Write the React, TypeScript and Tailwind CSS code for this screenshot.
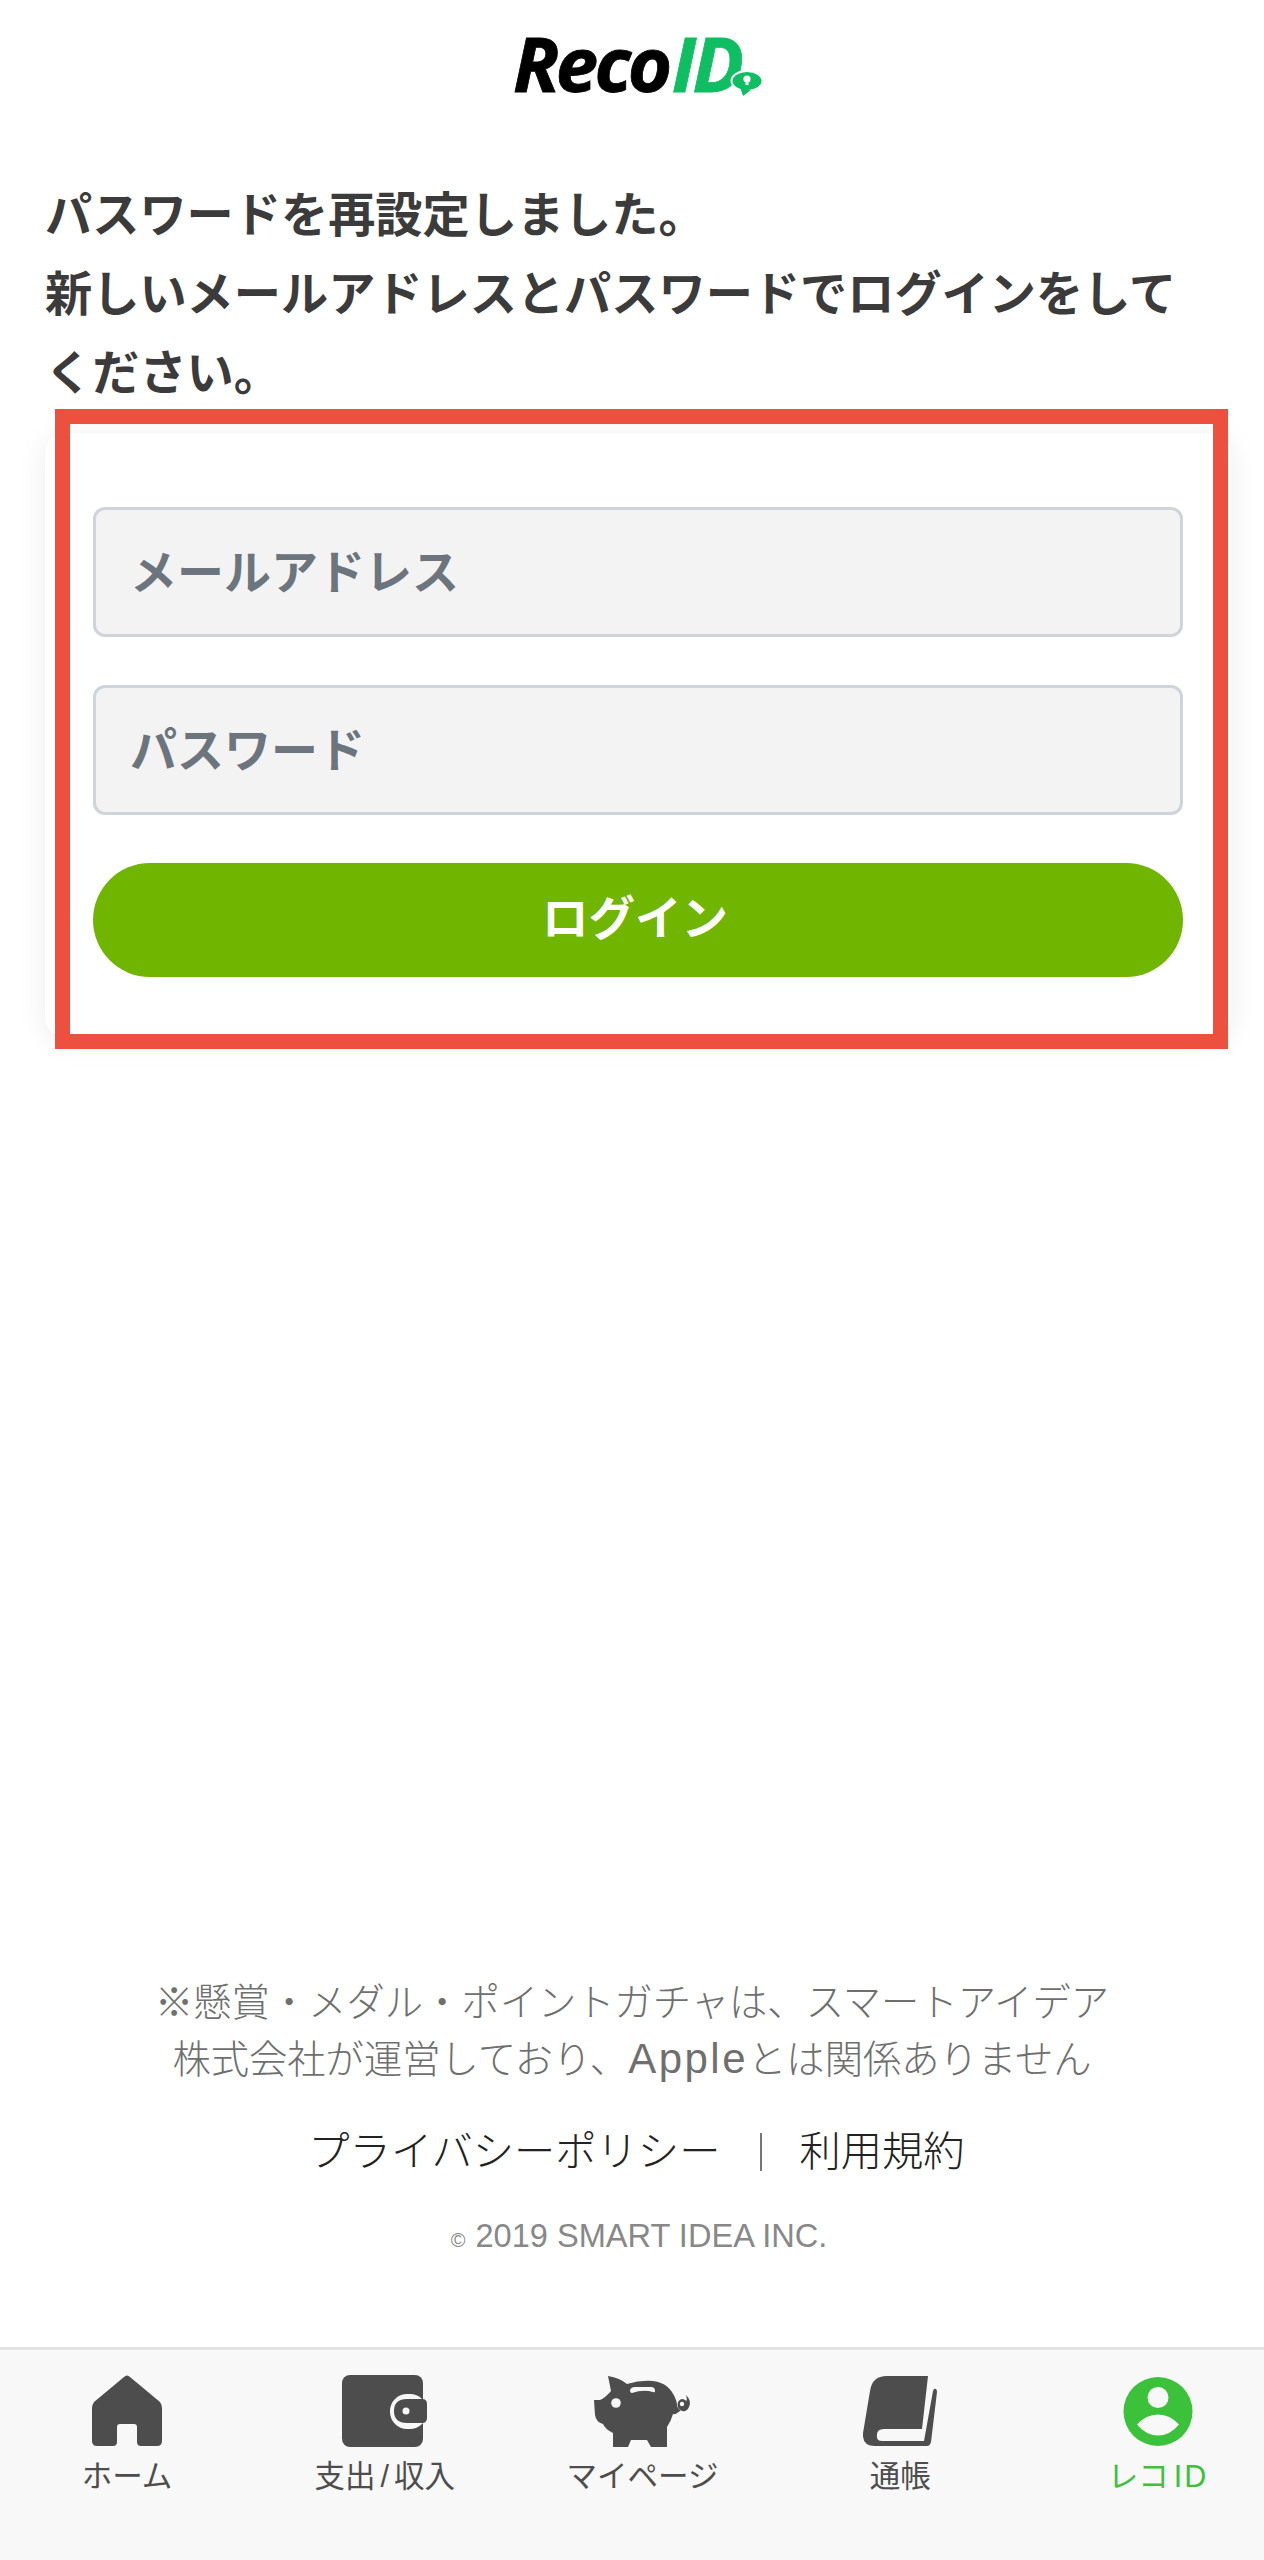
import type { ReactNode } from 'react';

function HomeIcon() {
  return (
    <svg viewBox="0 0 72 72" className="h-[72px] w-[72px] fill-[#4d4d4d]" aria-hidden="true">
      <path d="M33 2 Q36 -1 39 2 L69 27 Q71 30 71 33 V66 Q71 71 66 71 H50 Q46 71 46 67 V52 Q46 49 43 49 H29 Q26 49 26 52 V67 Q26 71 22 71 H6 Q1 71 1 66 V33 Q1 30 3 27 Z" />
    </svg>
  );
}

function WalletIcon() {
  return (
    <svg viewBox="0 0 85 72" className="h-[72px] w-[85px]" aria-hidden="true">
      <rect x="0" y="0" width="81" height="72" rx="8" fill="#4d4d4d" />
      <rect x="48" y="19" width="37" height="35" rx="17" fill="#f8f8f8" />
      <path d="M65 24 H80 Q85 24 85 29 V43 Q85 48 80 48 H65 Q52 48 52 36 Q52 24 65 24 Z" fill="#4d4d4d" />
      <circle cx="64" cy="36" r="3.5" fill="#f8f8f8" />
    </svg>
  );
}

function PiggyIcon() {
  return (
    <svg viewBox="8 8 100 73" className="h-[73px] w-[100px]" aria-hidden="true">
      <path
        d="M23 9 Q35 11 42 17 Q55 13 68 14 Q85 16 91 33 Q92 36 92 39 Q94 43 96 43 Q91 48 88 47 Q86 54 82 60 V80 H66 L62 73 H46 L43 80 H28 V66 Q20 62 18 57 Q11 55 10 48 L9 33 H15 Q20 31 26 24 Z"
        fill="#4d4d4d"
      />
      <path d="M97 44 Q91 41 93 35 Q96 30 100 33 Q103 36 101 28 Q107 34 104 40 Q102 45 97 44 Z" fill="#4d4d4d" />
      <circle cx="97" cy="37" r="2.2" fill="#f8f8f8" />
      <circle cx="31" cy="36" r="4.8" fill="#f8f8f8" />
      <path d="M45 23 Q46 20 50 20 H66 Q70 20 70 24 Q70 26 68 25 Q58 22 47 26 Q45 26 45 23 Z" fill="#f8f8f8" />
    </svg>
  );
}

function BookIcon() {
  return (
    <svg viewBox="14 8 75 72" className="h-[72px] w-[75px] fill-[#4d4d4d]" aria-hidden="true">
      <path d="M38 9 H79 L73 62 H35 Q27 62 28 70 Q28 74 33 74 H75 L84 24 Q85 21 87 22 Q88 23 88 25 L82 75 Q81 79 78 79 H26 Q13 79 14 66 L21 24 Q23 9 38 9 Z" />
    </svg>
  );
}

function UserIcon() {
  return (
    <svg viewBox="13 8.5 70 71" className="h-[71px] w-[70px]" aria-hidden="true">
      <circle cx="48" cy="44" r="34.5" fill="#3cc13b" />
      <circle cx="48" cy="30" r="10.5" fill="#f8f8f8" />
      <path d="M27 57 Q36 47 48 47 Q60 47 69 57 Q60 68 48 68 Q36 68 27 57 Z" fill="#f8f8f8" />
    </svg>
  );
}

function Tab({ icon, label, active }: { icon: ReactNode; label: ReactNode; active?: boolean }) {
  return (
    <div className="flex w-[200px] flex-col items-center">
      <div className="flex h-[72px] items-center justify-center">{icon}</div>
      <span className={`mt-[9px] text-[30.5px] leading-[40px] ${active ? 'text-[#3cc13b]' : 'text-[#4d4d4d]'}`}>
        {label}
      </span>
    </div>
  );
}

function Logo() {
  return (
    <div className="relative flex w-[238px] font-['Open_Sans',sans-serif] text-[76px] leading-[76px] font-bold tracking-[-3.5px] italic [-webkit-text-stroke:0.8px]">
      <span className="text-black">Reco</span>
      <span className="ml-[3px] text-[#0fbe62]">ID</span>
      <svg viewBox="-2 -2 36 30" className="absolute top-[44px] left-[216px] h-[30px] w-[36px]" aria-hidden="true">
        <ellipse cx="16" cy="10" rx="15.5" ry="10" fill="#0fbe62" stroke="#fff" strokeWidth="2" />
        <path d="M9 16 L12 25 L20 19 Z" fill="#0fbe62" />
        <circle cx="16" cy="8" r="3.6" fill="#fff" />
        <rect x="14.5" y="10" width="3" height="4" fill="#fff" />
      </svg>
    </div>
  );
}

export default function App() {
  return (
    <div className="flex min-h-[2560px] flex-col bg-white font-['Liberation_Sans','Noto_Sans_CJK_JP',sans-serif]">
      <header className="flex h-[176px] justify-center pt-[25px]">
        <Logo />
      </header>

      <p className="px-[45px] text-[47.2px] leading-[79px] font-bold text-[#3b3b3b]">
        パスワードを再設定しました。
        <br />
        新しいメールアドレスとパスワードでログインをして
        <br />
        ください。
      </p>

      <div className="relative mt-[20px] mr-[33px] ml-[45px] rounded-[20px] bg-white px-[48px] pt-[74px] pb-[60px] shadow-[0_4px_30px_rgba(0,0,0,0.08)]">
        <div className="flex flex-col gap-[48px]">
          <input
            readOnly
            placeholder="メールアドレス"
            className="h-[130px] rounded-[12px] border-[3px] border-[#ced4da] bg-[#f3f3f3] px-[34px] text-[47px] font-bold placeholder:text-[#6c757d]"
          />
          <input
            readOnly
            placeholder="パスワード"
            className="h-[130px] rounded-[12px] border-[3px] border-[#ced4da] bg-[#f3f3f3] px-[34px] text-[47px] font-bold placeholder:text-[#6c757d]"
          />
          <button className="h-[114px] rounded-full bg-[#70b500] pr-[6px] text-[46.5px] font-bold text-white">
            ログイン
          </button>
        </div>
        {/* annotation frame drawn over the card */}
        <div className="absolute top-[-24px] right-[3px] bottom-[-12px] left-[10px] border-[15px] border-[#ee5040]" />
      </div>

      <footer className="mt-auto text-center">
        <p className="text-[38.3px] leading-[57px] font-light text-[#6f6f6f]">
          ※懸賞・メダル・ポイントガチャは、スマートアイデア
          <br />
          株式会社が運営しており、<span className="text-[42px] leading-none tracking-[2.5px]">Apple</span>
          とは関係ありません
        </p>
        <div className="mt-[33px] flex items-center justify-center pl-[9px] text-[41.3px] leading-[62px] font-light text-[#222]">
          <span>プライバシーポリシー</span>
          <span className="mr-[37px] ml-[40px] h-[38px] w-[2px] bg-[#777]" />
          <span>利用規約</span>
        </div>
        <p className="mt-[33px] flex items-baseline justify-center gap-[10px] pl-[14px] text-[32.6px] leading-[40px] text-[#888]">
          <span className="text-[20px]">©</span>
          <span>2019 SMART IDEA INC.</span>
        </p>
      </footer>

      <nav className="mt-[87px] flex h-[213px] justify-between border-t-[3px] border-[#e2e2e2] bg-[#f8f8f8] pt-[25px] pr-[6px] pl-[27px]">
        <Tab icon={<HomeIcon />} label="ホーム" />
        <Tab
          icon={<WalletIcon />}
          label={
            <>
              支出<span className="mx-[5px]">/</span>収入
            </>
          }
        />
        <Tab icon={<PiggyIcon />} label="マイページ" />
        <Tab icon={<BookIcon />} label="通帳" />
        <Tab
          icon={<UserIcon />}
          label={
            <>
              レコ<span className="ml-[5px] tracking-[2px]">ID</span>
            </>
          }
          active
        />
      </nav>
    </div>
  );
}
